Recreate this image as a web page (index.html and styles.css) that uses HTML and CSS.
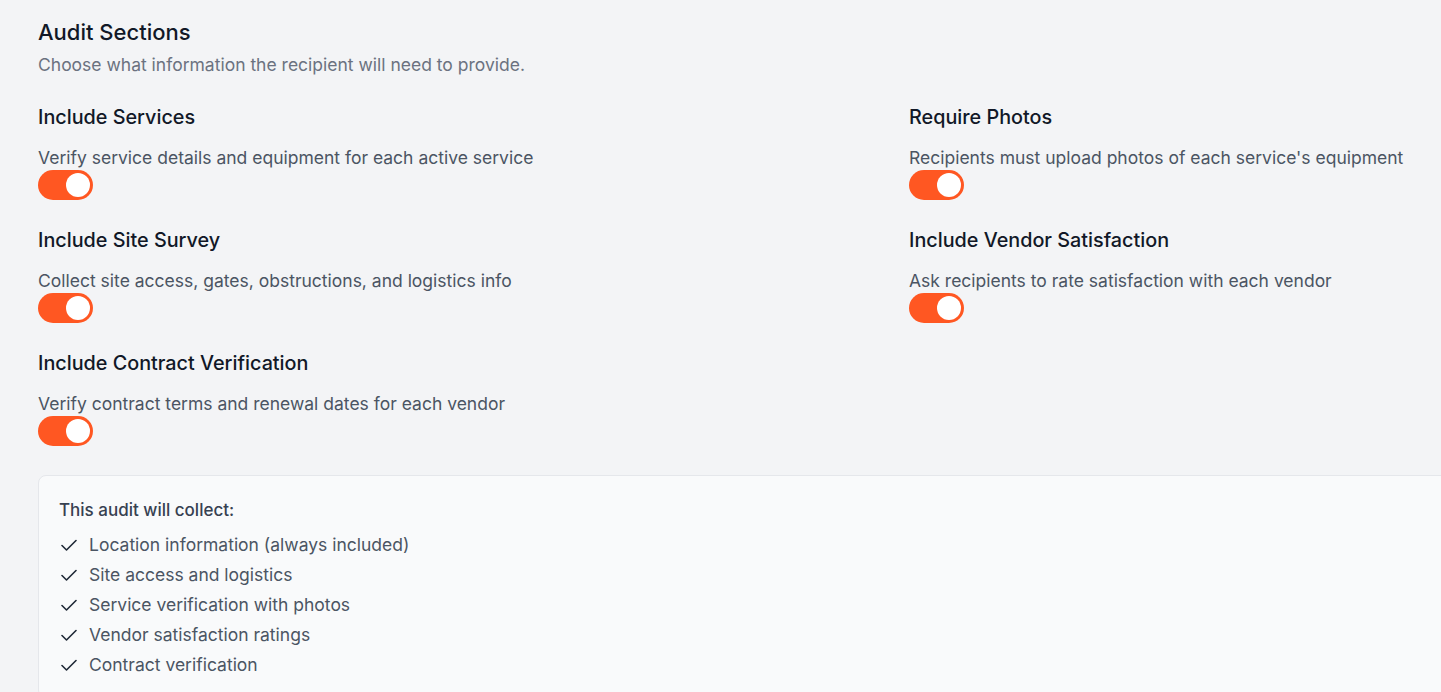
FILE: index.html
```html
<!DOCTYPE html>
<html lang="en">
<head>
<meta charset="utf-8">
<title>Audit Sections</title>
<link rel="stylesheet" href="styles.css">
</head>
<body>
<main class="page">
  <section class="audit">
    <h2 class="audit-title">Audit Sections</h2>
    <p class="audit-sub">Choose what information the recipient will need to provide.</p>

    <div class="options">
      <div class="option">
        <h3 class="option-label">Include Services</h3>
        <p class="option-desc">Verify service details and equipment for each active service</p>
        <button class="toggle is-on" type="button" aria-pressed="true"><span class="knob"></span></button>
      </div>
      <div class="option">
        <h3 class="option-label">Require Photos</h3>
        <p class="option-desc">Recipients must upload photos of each service's equipment</p>
        <button class="toggle is-on" type="button" aria-pressed="true"><span class="knob"></span></button>
      </div>
      <div class="option">
        <h3 class="option-label">Include Site Survey</h3>
        <p class="option-desc">Collect site access, gates, obstructions, and logistics info</p>
        <button class="toggle is-on" type="button" aria-pressed="true"><span class="knob"></span></button>
      </div>
      <div class="option">
        <h3 class="option-label">Include Vendor Satisfaction</h3>
        <p class="option-desc">Ask recipients to rate satisfaction with each vendor</p>
        <button class="toggle is-on" type="button" aria-pressed="true"><span class="knob"></span></button>
      </div>
      <div class="option">
        <h3 class="option-label">Include Contract Verification</h3>
        <p class="option-desc">Verify contract terms and renewal dates for each vendor</p>
        <button class="toggle is-on" type="button" aria-pressed="true"><span class="knob"></span></button>
      </div>
    </div>

    <div class="summary">
      <p class="summary-title">This audit will collect:</p>
      <ul class="summary-list">
        <li><svg class="check" viewBox="0 0 16 12" aria-hidden="true"><path d="M1 6.5 L5.5 11 L15 1.5"/></svg>Location information (always included)</li>
        <li><svg class="check" viewBox="0 0 16 12" aria-hidden="true"><path d="M1 6.5 L5.5 11 L15 1.5"/></svg>Site access and logistics</li>
        <li><svg class="check" viewBox="0 0 16 12" aria-hidden="true"><path d="M1 6.5 L5.5 11 L15 1.5"/></svg>Service verification with photos</li>
        <li><svg class="check" viewBox="0 0 16 12" aria-hidden="true"><path d="M1 6.5 L5.5 11 L15 1.5"/></svg>Vendor satisfaction ratings</li>
        <li><svg class="check" viewBox="0 0 16 12" aria-hidden="true"><path d="M1 6.5 L5.5 11 L15 1.5"/></svg>Contract verification</li>
      </ul>
    </div>
  </section>
</main>
</body>
</html>
```

FILE: styles.css
```css
* { box-sizing: border-box; }

html, body {
  margin: 0;
  padding: 0;
  background: #f3f4f6;
  overflow: hidden;
}

body {
  font-family: Inter, "Noto Sans", "Liberation Sans", sans-serif;
  color: #111827;
}

.page {
  padding: 18px 0 0 38px;
}

.audit {
  width: 1718px;
}

.audit-title {
  margin: 0;
  font-size: 22px;
  line-height: 28px;
  font-weight: 500;
  color: #111827;
}

.audit-sub {
  margin: 7px 0 0;
  font-size: 17.5px;
  line-height: 24px;
  color: #6b7280;
}

.options {
  margin-top: 26px;
  display: grid;
  grid-template-columns: 1fr 1fr;
  column-gap: 24px;
  row-gap: 26px;
}

.option {
  display: flex;
  flex-direction: column;
  align-items: flex-start;
}

.option-label {
  margin: 0;
  font-size: 19.8px;
  line-height: 28px;
  font-weight: 500;
  color: #111827;
}

.option-desc {
  margin: 15px 0 0;
  font-size: 17.5px;
  line-height: 24px;
  color: #4b5563;
}

.toggle {
  display: flex;
  align-items: center;
  width: 55px;
  height: 30px;
  padding: 0 3px;
  border: 0;
  border-radius: 15px;
  background: #ff5722;
  cursor: pointer;
}

.toggle.is-on {
  justify-content: flex-end;
}

.knob {
  width: 24px;
  height: 24px;
  border-radius: 50%;
  background: #ffffff;
}

.summary {
  margin-top: 29px;
  background: #f9fafb;
  border: 1px solid #e5e7eb;
  border-radius: 8px;
  padding: 23px 20px 20px;
}

.summary-title {
  margin: 0;
  font-size: 17px;
  line-height: 22px;
  font-weight: 500;
  color: #374151;
}

.summary-list {
  list-style: none;
  margin: 12px 0 0;
  padding: 0;
  display: flex;
  flex-direction: column;
  gap: 6px;
}

.summary-list li {
  display: flex;
  align-items: center;
  gap: 12px;
  font-size: 17.5px;
  line-height: 24px;
  color: #4b5563;
}

.check {
  width: 16px;
  height: 12px;
  margin-left: 2px;
  flex: none;
  fill: none;
  stroke: #1f2937;
  stroke-width: 1.6;
  stroke-linecap: round;
  stroke-linejoin: round;
}
```
